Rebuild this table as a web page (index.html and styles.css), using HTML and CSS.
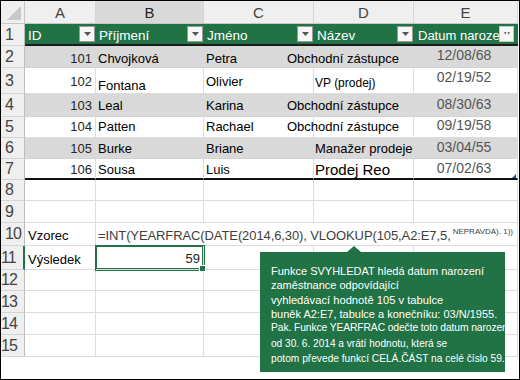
FILE: index.html
```html
<!DOCTYPE html>
<html lang="cs">
<head>
<meta charset="utf-8">
<title>Excel</title>
<link rel="stylesheet" href="styles.css">
</head>
<body>
<div class="sheet">
  <div class="grid">
    <div class="corner"><svg width="14" height="14" viewBox="0 0 14 14"><polygon points="14,0 14,14 0,14" fill="#c8c8c8"/></svg></div>
    <div class="ch">A</div><div class="ch sel">B</div><div class="ch">C</div><div class="ch">D</div><div class="ch">E</div>

    <div class="rh">1</div>
    <div class="c th"><span class="lbl">ID</span><span class="fb"><svg width="7" height="4" viewBox="0 0 7 4"><polygon points="0,0 7,0 3.5,4" fill="#555"/></svg></span></div>
    <div class="c th"><span class="lbl">Příjmení</span><span class="fb"><svg width="7" height="4" viewBox="0 0 7 4"><polygon points="0,0 7,0 3.5,4" fill="#555"/></svg></span></div>
    <div class="c th"><span class="lbl">Jméno</span><span class="fb"><svg width="7" height="4" viewBox="0 0 7 4"><polygon points="0,0 7,0 3.5,4" fill="#555"/></svg></span></div>
    <div class="c th th-d"><span class="lbl">Název</span><span class="fb"><svg width="7" height="4" viewBox="0 0 7 4"><polygon points="0,0 7,0 3.5,4" fill="#555"/></svg></span></div>
    <div class="c th th-e"><span class="lbl">Datum naroze</span><span class="fb fb-sm"><svg width="6" height="4" viewBox="0 0 6 4"><polygon points="0,0 2.6,0 1.3,3" fill="#777"/><polygon points="3.4,0 6,0 4.7,3" fill="#777"/></svg></span></div>

    <div class="rh">2</div>
    <div class="c band r2 num">101</div>
    <div class="c band r2 txt">Chvojková</div>
    <div class="c band r2 txt">Petra</div>
    <div class="c band r2 over">Obchodní zástupce</div>
    <div class="c band r2 dt">12/08/68</div>

    <div class="rh">3</div>
    <div class="c r3 num up">102</div>
    <div class="c r3 txt">Fontana</div>
    <div class="c r3 txt up">Olivier</div>
    <div class="c r3 txt dtxt small">VP (prodej)</div>
    <div class="c r3 dt up2">02/19/52</div>

    <div class="rh">4</div>
    <div class="c band r4 num">103</div>
    <div class="c band r4 txt">Leal</div>
    <div class="c band r4 txt">Karina</div>
    <div class="c band r4 over">Obchodní zástupce</div>
    <div class="c band r4 dt">08/30/63</div>

    <div class="rh">5</div>
    <div class="c r5 num">104</div>
    <div class="c r5 txt">Patten</div>
    <div class="c r5 txt">Rachael</div>
    <div class="c r5 over">Obchodní zástupce</div>
    <div class="c r5 dt">09/19/58</div>

    <div class="rh">6</div>
    <div class="c band r6 num">105</div>
    <div class="c band r6 txt">Burke</div>
    <div class="c band r6 txt">Briane</div>
    <div class="c band r6 txt dtxt">Manažer prodeje</div>
    <div class="c band r6 dt">03/04/55</div>

    <div class="rh">7</div>
    <div class="c r7 num">106</div>
    <div class="c r7 txt">Sousa</div>
    <div class="c r7 txt">Luis</div>
    <div class="c r7 txt dtxt big">Prodej Reo</div>
    <div class="c r7 dt last">07/02/63<span class="rs"></span></div>

    <div class="rh">8</div>
    <div class="c"></div><div class="c"></div><div class="c"></div><div class="c"></div><div class="c"></div>

    <div class="rh">9</div>
    <div class="c"></div><div class="c"></div><div class="c"></div><div class="c"></div><div class="c"></div>

    <div class="rh">10</div>
    <div class="c txt lab">Vzorec</div>
    <div class="c txt formula">=INT(YEARFRAC(DATE(2014,6,30), VLOOKUP(105,A2:E7,5, <span class="tiny">NEPRAVDA). 1))</span></div>

    <div class="rh rh-sel shift">11</div>
    <div class="c txt lab">Výsledek</div>
    <div class="c num active">59</div>
    <div class="c"></div><div class="c"></div><div class="c"></div>

    <div class="rh shift">12</div>
    <div class="c"></div><div class="c"></div><div class="c"></div><div class="c"></div><div class="c"></div>

    <div class="rh shift">13</div>
    <div class="c"></div><div class="c"></div><div class="c"></div><div class="c"></div><div class="c"></div>

    <div class="rh shift">14</div>
    <div class="c"></div><div class="c"></div><div class="c"></div><div class="c"></div><div class="c"></div>

    <div class="rh shift">15</div>
    <div class="c"></div><div class="c"></div><div class="c"></div><div class="c"></div><div class="c"></div>
  </div>

  <div class="tip">
    <div class="tl l1">Funkce SVYHLEDAT hledá datum narození</div>
    <div class="tl l2">zaměstnance odpovídající</div>
    <div class="tl l3">vyhledávací hodnotě 105 v tabulce</div>
    <div class="tl l4">buněk A2:E7, tabulce a konečníku: 03/N/1955.</div>
    <div class="tl l5">Pak. Funkce YEARFRAC odečte toto datum narozen</div>
    <div class="tl l6">od 30. 6. 2014 a vrátí hodnotu, která se</div>
    <div class="tl l7">potom převede funkcí CELÁ.ČÁST na celé číslo 59.</div>
  </div>
</div>
</body>
</html>
```

FILE: styles.css
```css
html, body {
  margin: 0;
  padding: 0;
  background: #fff;
}

.sheet {
  position: relative;
  width: 520px;
  height: 380px;
  box-sizing: border-box;
  border: 1px solid #000;
  background: #fff;
  overflow: hidden;
  font-family: "Liberation Sans", Arial, sans-serif;
  font-size: 13px;
  color: #000;
}

.grid {
  display: grid;
  grid-template-columns: 24px 71px 108px 110px 100px 104px;
  grid-template-rows: 23px 22px 22px 26px 23px 21px 21px 21px 21px 22px 23px 24px 21px 22px 22px 22px;
}

.corner {
  background: #efefef;
  border-right: 1px solid #c6c6c6;
  border-bottom: 1px solid #c6c6c6;
  box-sizing: border-box;
  display: flex;
  align-items: flex-end;
  justify-content: flex-end;
  padding: 0 3px 3px 0;
}

.ch {
  background: #efefef;
  border-right: 1px solid #d4d4d4;
  border-bottom: 1px solid #c6c6c6;
  box-sizing: border-box;
  display: flex;
  align-items: center;
  justify-content: center;
  font-size: 15px;
  color: #444;
  padding-top: 1px;
}

.ch.sel {
  background: #d9d9d9;
  color: #262626;
}

.rh {
  background: #efefef;
  border-right: 1px solid #bdbdbd;
  border-bottom: 1px solid #d4d4d4;
  box-sizing: border-box;
  display: flex;
  align-items: center;
  padding-left: 4px;
  font-size: 16px;
  color: #444;
  letter-spacing: -1px;
}

.rh.shift {
  padding-left: 0;
}

.rh-sel {
  border-right: 2px solid #217346;
}

.c {
  box-sizing: border-box;
  border-right: 1px solid #dcdcdc;
  border-bottom: 1px solid #dcdcdc;
  display: flex;
  align-items: flex-end;
  padding-bottom: 2px;
  line-height: 15px;
  white-space: nowrap;
  min-width: 0;
}

/* header row of the table */
.th {
  background: #217346;
  color: #fff;
  border-right: none;
  border-bottom: 2px solid #1c1c1c;
  padding-left: 3px;
  padding-bottom: 1px;
  font-size: 13.5px;
}

.th .lbl {
  flex: 1 1 auto;
  min-width: 0;
}

.th-e {
  padding-left: 4px;
  font-size: 13px;
}

.fb {
  flex: 0 0 auto;
  align-self: center;
  width: 16px;
  height: 16px;
  margin-right: 1px;
  margin-top: 1px;
  box-sizing: border-box;
  background: #f6f6f6;
  border: 1px solid #9a9a9a;
  display: flex;
  align-items: center;
  justify-content: center;
}

.fb-sm {
  width: 15px;
  height: 16px;
  margin-right: 4px;
  border-color: #c8c8c8;
}

.band {
  background: #d9d9d9;
  border-right-color: #d9d9d9;
  border-bottom-color: #d2d2d2;
}

.num {
  justify-content: flex-end;
  padding-right: 3px;
  color: #262626;
}

.txt {
  padding-left: 2px;
}

.dtxt {
  padding-left: 1px;
}

.over {
  justify-content: flex-end;
  padding-right: 14px;
}

.dt {
  justify-content: center;
  padding-right: 3px;
  color: #555;
  font-size: 14px;
  padding-bottom: 5px;
}

.r2 { padding-bottom: 1px; }
.r2.dt { padding-bottom: 4px; }
.r3 { padding-bottom: 0; }
.r3.up { padding-bottom: 4px; }
.r3.dt { padding-bottom: 8px; }
.r3.small { font-size: 12px; padding-bottom: 2px; }
.r4 { padding-bottom: 3px; }
.r4.dt { padding-bottom: 4px; }
.r5 { padding-bottom: 3px; }
.r5.dt { padding-bottom: 4px; }
.r6 { padding-bottom: 2px; }
.r6.dt { padding-bottom: 3px; }
.r7 {
  border-bottom: 2px solid #111;
  padding-bottom: 1px;
}
.r7.dt { padding-bottom: 2px; }
.r7.big { font-size: 15px; }

.last {
  position: relative;
}

.rs {
  position: absolute;
  right: 1px;
  bottom: 0;
  width: 0;
  height: 0;
  border-left: 4px solid transparent;
  border-bottom: 4px solid #2a4fa8;
}

.lab {
  padding-left: 3px;
}

.formula {
  grid-column: span 4;
  color: #404040;
  letter-spacing: -0.1px;
}

.tiny {
  font-size: 8px;
  letter-spacing: 0;
  position: relative;
  top: -4px;
  margin-left: 2px;
}

.active {
  position: relative;
  box-shadow: 0 0 0 1px #217346, inset 0 0 0 1px #217346;
  padding-right: 3px;
  padding-bottom: 3px;
}

.active::after {
  content: "";
  position: absolute;
  right: -3px;
  bottom: -3px;
  width: 5px;
  height: 5px;
  background: #217346;
  border: 1px solid #fff;
}

/* tooltip */
.tip {
  position: absolute;
  left: 259px;
  top: 251px;
  width: 245px;
  height: 120px;
  box-sizing: border-box;
  background: #217346;
  color: #fff;
  padding: 12px 0 0 11px;
  font-family: "Liberation Sans", Arial, sans-serif;
  font-size: 11px;
}

.tip::before {
  content: "";
  position: absolute;
  left: 87px;
  top: -6px;
  width: 0;
  height: 0;
  border-left: 7px solid transparent;
  border-right: 7px solid transparent;
  border-bottom: 6px solid #217346;
}

.tl {
  white-space: nowrap;
  line-height: 14px;
}

.l1 { height: 14px; }
.l2 { height: 15px; }
.l3 { height: 14px; font-size: 11.2px; }
.l4 { height: 14px; }
.l5 { height: 16px; font-size: 10.3px; letter-spacing: -0.1px; }
.l6 { height: 15px; font-size: 10.1px; }
.l7 { height: 15px; font-size: 10.2px; }
```
